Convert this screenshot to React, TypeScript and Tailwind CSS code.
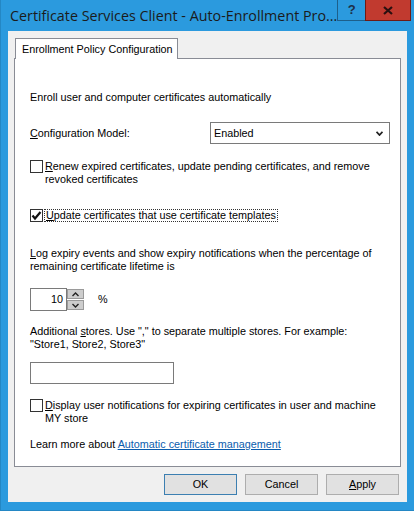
import React from "react";

const body = "font-['Liberation_Sans',Arial,sans-serif] text-[10.8px] leading-[13px] text-black";

function Checkbox({ checked }: { checked?: boolean }) {
    return (
        <div className="w-[13px] h-[13px] shrink-0 border border-[#333333] bg-white relative">
            {checked && (
                <svg viewBox="0 0 13 13" className="absolute -left-px -top-px w-[13px] h-[13px]">
                    <path d="M2.5 6.5 L5 9.5 L10.5 3" stroke="#111" strokeWidth="2.2" fill="none" />
                </svg>
            )}
        </div>
    );
}

function Chevron({ up }: { up?: boolean }) {
    return (
        <svg viewBox="0 0 7 5" className="w-[7px] h-[5px]">
            <path d={up ? "M0.5 4 L3.5 1 L6.5 4" : "M0.5 1 L3.5 4 L6.5 1"} stroke="#222" strokeWidth="1.4" fill="none" />
        </svg>
    );
}

function DialogButton({ label, primary }: { label: React.ReactNode; primary?: boolean }) {
    return (
        <div
            className={`w-[73px] h-[21px] flex items-center justify-center bg-[#e1e1e1] border ${
                primary ? "border-[#3c7fb1]" : "border-[#adadad]"
            }`}
        >
            {label}
        </div>
    );
}

export default function App() {
    return (
        <div className="w-[414px] h-[511px] bg-[#2b9ade] flex flex-col border-l border-b border-[#2487c4]">
            {/* title bar */}
            <div className="h-[31px] flex items-start shrink-0">
                <div className="pl-[9px] pt-[6px] font-['Open_Sans',sans-serif] text-[14.3px] leading-[19px] text-[#1b1b1b] whitespace-nowrap">
                    Certificate Services Client - Auto-Enrollment Pro...
                </div>
                <div className="ml-auto mr-[6px] flex">
                    <div className="w-[28px] h-[21px] bg-[#2b9ade] border-l border-b border-[#1d5f8a] flex items-center justify-center font-['Liberation_Sans',sans-serif] font-bold text-[13px] text-[#1d2f47]">
                        ?
                    </div>
                    <div className="w-[46px] h-[21px] bg-[#c13a2f] border-l border-b border-r border-[#6e1a14] flex items-center justify-center">
                        <svg viewBox="0 0 10 9" className="w-[10px] h-[9px]">
                            <path d="M1 1 L9 8 M9 1 L1 8" stroke="#2a1010" strokeWidth="2.2" />
                        </svg>
                    </div>
                </div>
            </div>

            {/* client area */}
            <div className={`flex-1 mx-[7px] mb-[8px] ml-[7px] bg-[#f0f0f0] flex flex-col px-[6px] pt-[7px] ${body}`}>
                {/* tab */}
                <div className="flex">
                    <div className="ml-px w-[163px] h-[21px] bg-white border border-b-0 border-[#898c95] flex items-center pl-[6px] -mb-px relative z-10">
                        Enrollment Policy Configuration
                    </div>
                </div>

                {/* tab panel */}
                <div className="h-[409px] bg-white border border-[#898c95] flex flex-col pl-[15px] pr-[10px]">
                    <div className="mt-[32px]">Enroll user and computer certificates automatically</div>

                    <div className="mt-[18px] flex items-center h-[22px]">
                        <div className="w-[180px]">
                            <span className="underline">C</span>onfiguration Model:
                        </div>
                        <div className="w-[180px] h-[22px] border border-[#7a7a7a] flex items-center pl-[3px] pr-[6px]">
                            <span className="flex-1">Enabled</span>
                            <svg viewBox="0 0 7 5" className="w-[7px] h-[5px]">
                                <path d="M0.5 0.8 L3.5 4 L6.5 0.8" stroke="#222" strokeWidth="1.8" fill="none" />
                            </svg>
                        </div>
                    </div>

                    <div className="mt-[16px] flex items-start gap-[2px]">
                        <Checkbox />
                        <div>
                            <span className="underline">R</span>enew expired certificates, update pending certificates, and remove
                            <br />
                            revoked certificates
                        </div>
                    </div>

                    <div className="mt-[23px] flex items-start gap-[1px]">
                        <Checkbox checked />
                        <div className="border border-dotted border-[#333] px-px leading-[11px]">
                            <span className="underline">U</span>pdate certificates that use certificate templates
                        </div>
                    </div>

                    <div className="mt-[25px]">
                        <span className="underline">L</span>og expiry events and show expiry notifications when the percentage of
                        <br />
                        remaining certificate lifetime is
                    </div>

                    <div className="mt-[15px] flex items-center">
                        <div className="w-[37px] h-[23px] border border-[#7a7a7a] flex items-center justify-end pr-[3px]">10</div>
                        <div className="flex flex-col gap-px">
                            <div className="w-[17px] h-[10px] bg-[#cdcdcd] border border-[#9a9a9a] flex items-center justify-center">
                                <Chevron up />
                            </div>
                            <div className="w-[17px] h-[10px] bg-[#cdcdcd] border border-[#9a9a9a] flex items-center justify-center">
                                <Chevron />
                            </div>
                        </div>
                        <div className="ml-[14px]">%</div>
                    </div>

                    <div className="mt-[14px]">
                        Additional <span className="underline">s</span>tores. Use "," to separate multiple stores. For example:
                        <br />
                        "Store1, Store2, Store3"
                    </div>

                    <div className="mt-[11px] w-[144px] h-[22px] border border-[#7a7a7a]" />

                    <div className="mt-[15px] flex items-start gap-[2px]">
                        <Checkbox />
                        <div>
                            <span className="underline">D</span>isplay user notifications for expiring certificates in user and machine
                            <br />
                            MY store
                        </div>
                    </div>

                    <div className="mt-[13px]">
                        Learn more about <span className="text-[#0b5cad] underline">Automatic certificate management</span>
                    </div>
                </div>

                {/* buttons */}
                <div className="mt-[7px] flex justify-end gap-[8px] pr-[2px]">
                    <DialogButton label="OK" primary />
                    <DialogButton label="Cancel" />
                    <DialogButton
                        label={
                            <span>
                                <span className="underline">A</span>pply
                            </span>
                        }
                    />
                </div>
            </div>
        </div>
    );
}
